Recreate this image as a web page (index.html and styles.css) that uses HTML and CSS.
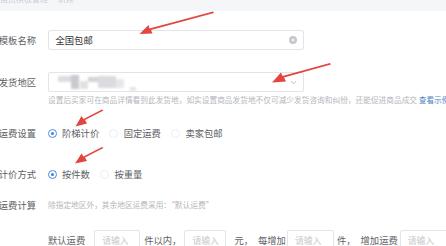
FILE: index.html
```html
<!DOCTYPE html>
<html lang="zh">
<head>
<meta charset="utf-8">
<link rel="stylesheet" href="styles.css">
</head>
<body>
<div class="page">
  <div class="topbar"><span class="crumb">运费模板管理</span><span class="crumb">新建</span></div>
  <div class="form">
    <div class="row r1">
      <div class="label">模板名称</div>
      <div class="input wide">
        <span class="value">全国包邮</span>
        <span class="clear"><svg width="8" height="8" viewBox="0 0 8 8"><circle cx="4" cy="4" r="4" fill="#c4c6cb"/><path d="M2.6 2.6L5.4 5.4M5.4 2.6L2.6 5.4" stroke="#fff" stroke-width="0.9"/></svg></span>
      </div>
    </div>
    <div class="row r2">
      <div class="label">发货地区</div>
      <div class="input wide">
        <span class="mosaic">
          <i class="m1"></i><i class="m2"></i><i class="m3"></i><i class="m4"></i><i class="m5"></i><i class="m6"></i><i class="m7"></i>
        </span>
        <span class="chev"><svg width="7" height="5" viewBox="0 0 7 5"><path d="M0.8 1L3.5 3.8L6.2 1" fill="none" stroke="#b8bbc1" stroke-width="0.9"/></svg></span>
      </div>
    </div>
    <div class="hint h1">设置后买家可在商品详情看到此发货地，如实设置商品发货地不仅可减少发货咨询和纠纷，还能促进商品成交 <span class="link">查看示例</span></div>
    <div class="row r3">
      <div class="label">运费设置</div>
      <div class="radios">
        <span class="radio on"><i></i>阶梯计价</span>
        <span class="radio"><i></i>固定运费</span>
        <span class="radio"><i></i>卖家包邮</span>
      </div>
    </div>
    <div class="row r4">
      <div class="label">计价方式</div>
      <div class="radios">
        <span class="radio on"><i></i>按件数</span>
        <span class="radio"><i></i>按重量</span>
      </div>
    </div>
    <div class="row r5">
      <div class="label">运费计算</div>
      <div class="hint">除指定地区外，其余地区运费采用：“默认运费”</div>
    </div>
    <div class="row r6">
      <span class="txt t1">默认运费</span>
      <span class="input small s1">请输入</span>
      <span class="txt t2">件以内，</span>
      <span class="input small s2">请输入</span>
      <span class="txt t3">元，</span>
      <span class="txt t4">每增加</span>
      <span class="input small s3">请输入</span>
      <span class="txt t5">件，</span>
      <span class="txt t6">增加运费</span>
      <span class="input small s4">请输入</span>
    </div>
  </div>
  <svg class="arrows" width="446" height="246" viewBox="0 0 446 246">
    <g fill="#e2463f">
      <path d="M213 11.5 L214 13 L151 30 L152.5 33.5 L139.5 34 L148.5 25 L149.5 28.5 Z"/>
      <path d="M330 63 L331 64.5 L284 77.5 L286 81.5 L272 82.5 L281 72.5 L282.5 76 Z"/>
      <path d="M102 109.5 L103.5 110.5 L85 120 L87 123.5 L75.5 126.5 L81.5 116 L83.5 119 Z"/>
      <path d="M102 147 L103.5 148 L85 157.5 L87 161 L75 163.5 L81.5 153.5 L83.5 156.5 Z"/>
    </g>
  </svg>
</div>
</body>
</html>
```
FILE: styles.css
```css
html, body {
  margin: 0;
  padding: 0;
  background: #fff;
}
.page {
  position: relative;
  width: 446px;
  height: 246px;
  overflow: hidden;
  font-family: "Noto Sans CJK SC", "Noto Sans", sans-serif;
  font-size: 9.3px;
  color: #5f6166;
}
.topbar {
  height: 11px;
  background: #f5f6f8;
  display: flex;
  gap: 10px;
  overflow: hidden;
}
.crumb {
  display: block;
  font-size: 8px;
  line-height: 8px;
  margin-top: -5px;
  color: #c9ccd2;
  filter: blur(0.4px);
}
.form {
  padding-top: 19px;
}
.row {
  display: flex;
  align-items: center;
}
.label {
  width: 36px;
  flex: none;
  display: flex;
  justify-content: flex-end;
  white-space: nowrap;
  margin-right: 11.5px;
  color: #5c5e63;
}
.input {
  box-sizing: border-box;
  border: 1px solid #e2e4e8;
  border-radius: 2px;
  height: 20px;
  display: flex;
  align-items: center;
  background: #fff;
}
.wide {
  width: 256px;
  padding: 0 6px 0 7px;
  justify-content: space-between;
}
.value {
  color: #333;
}
.clear, .chev {
  display: flex;
}
.r1 { height: 20px; }
.r2 { height: 20px; margin-top: 22px; }
.mosaic {
  position: relative;
  width: 80px;
  height: 16px;
  filter: blur(1px);
}
.mosaic i {
  position: absolute;
  display: block;
  background: #d8d9dc;
}
.mosaic .m1 { left: 2px; top: 2px; width: 16px; height: 6px; background: #dcdde0; }
.mosaic .m2 { left: 15px; top: 1px; width: 8px; height: 14px; background: #c9cacd; }
.mosaic .m3 { left: 24px; top: 7px; width: 8px; height: 8px; background: #e0e1e3; }
.mosaic .m4 { left: 32px; top: 3px; width: 10px; height: 5px; background: #d3d4d7; }
.mosaic .m5 { left: 42px; top: 2px; width: 18px; height: 12px; background: #dadbde; }
.mosaic .m6 { left: 60px; top: 5px; width: 8px; height: 9px; background: #e6e7e9; }
.mosaic .m7 { left: 74px; top: 13px; width: 6px; height: 4px; background: #e3e4e6; }
.hint {
  font-size: 7.7px;
  line-height: 10px;
  color: #b4b7bc;
  white-space: nowrap;
}
.h1 {
  margin-left: 48px;
  margin-top: 3px;
}
.link {
  color: #5083c0;
}
.r3 { height: 14px; margin-top: 21px; }
.r4 { height: 14px; margin-top: 27px; }
.r5 { height: 14px; margin-top: 17px; }
.r5 .label { margin-right: 12px; }
.radios {
  display: flex;
  align-items: center;
  gap: 10px;
}
.radio {
  display: flex;
  align-items: center;
  color: #5c5e63;
}
.radio i {
  box-sizing: border-box;
  width: 9px;
  height: 9px;
  border-radius: 50%;
  border: 1px solid #eceef1;
  margin-right: 5.5px;
  display: flex;
  align-items: center;
  justify-content: center;
}
.radio.on i {
  border-color: #4d8ae0;
}
.radio.on i::after {
  content: "";
  width: 3px;
  height: 3px;
  border-radius: 50%;
  background: #3d7fdc;
}
.r6 {
  margin-top: 18px;
  height: 20px;
}
.small {
  padding-left: 7px;
  color: #c6c8cd;
  font-size: 8.8px;
  flex: none;
}
.t1 { margin-left: 48px; }
.s1 { width: 46px; margin-left: 9px; }
.t2 { margin-left: 4px; }
.s2 { width: 42px; margin-left: 3px; }
.t3 { margin-left: 8px; }
.t4 { margin-left: 5px; }
.s3 { width: 47px; margin-left: 1px; }
.t5 { margin-left: 3px; }
.t6 { margin-left: 5px; }
.s4 { width: 60px; margin-left: 2px; }
.txt { white-space: nowrap; flex: none; }
.arrows {
  position: absolute;
  left: 0;
  top: 0;
  pointer-events: none;
}
```
